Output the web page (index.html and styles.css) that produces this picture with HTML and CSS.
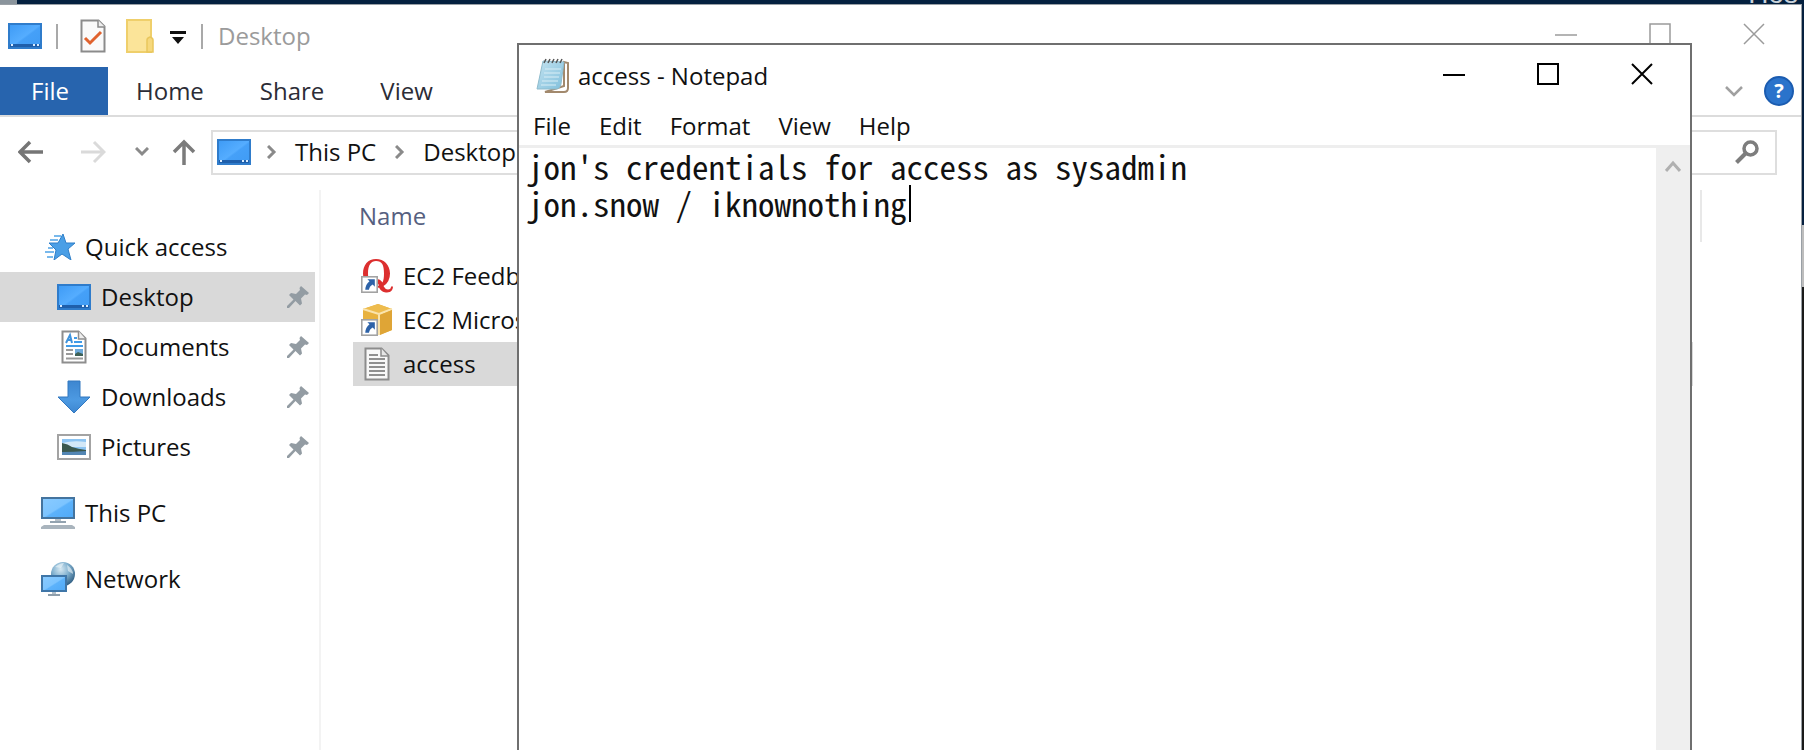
FILE: index.html
```html
<!DOCTYPE html>
<html lang="en">
<head>
<meta charset="utf-8">
<title>access - Notepad</title>
<link rel="stylesheet" href="styles.css">
</head>
<body>
<svg class="defs" aria-hidden="true">
  <defs>
    <linearGradient id="blue" x1="0" y1="0" x2="1" y2="1">
      <stop offset="0" stop-color="#3d9af5"/><stop offset=".5" stop-color="#55adff"/><stop offset=".55" stop-color="#45a0f8"/><stop offset="1" stop-color="#3f9bf4"/>
    </linearGradient>
    <linearGradient id="screen" x1="0" y1="0" x2="1" y2="1">
      <stop offset="0" stop-color="#8acbff"/><stop offset=".5" stop-color="#7cc4ff"/><stop offset=".55" stop-color="#5cb2fb"/><stop offset="1" stop-color="#4fa9f7"/>
    </linearGradient>
    <linearGradient id="arrow" x1="0" y1="0" x2="0" y2="1">
      <stop offset="0" stop-color="#3d86d0"/><stop offset=".6" stop-color="#4d9ae2"/><stop offset="1" stop-color="#3d86d0"/>
    </linearGradient>
    <radialGradient id="globe" cx=".4" cy=".3" r=".7">
      <stop offset="0" stop-color="#d6e8f2"/><stop offset=".5" stop-color="#83b2d0"/><stop offset="1" stop-color="#356488"/>
    </radialGradient>
    <linearGradient id="pad" x1="0" y1="0" x2="1" y2="1">
      <stop offset="0" stop-color="#c4e3f0"/><stop offset="1" stop-color="#7fbfdc"/>
    </linearGradient>
    <symbol id="desktop" viewBox="0 0 34 26">
      <rect x="1" y="1" width="32" height="24" fill="url(#blue)" stroke="#2f7ccb" stroke-width="2"/>
      <path d="M2 21h30v3H2z" fill="#1f5fab"/>
      <path d="M3 21h2v2H3zM25 21h2v2h-2zM29 21h2v2h-2z" fill="#d9ecff"/>
    </symbol>
    <symbol id="pin" viewBox="0 0 22 22">
      <path d="M14 0l8 7-2 2-2-.5-4 4 1 5-2 2-4.500-4.500L2 22H0v-2l6.500-6.500L2 9l2-2 5 1 4-4-.5-2z" fill="#939ca3"/>
    </symbol>
    <symbol id="shortcut" viewBox="0 0 16 16">
      <rect x=".75" y=".75" width="14.500" height="14.500" fill="#fff" stroke="#a3a3a3" stroke-width="1.500"/>
      <path d="M6 3h7v7l-2-2c-2 1-3 2.500-3.500 5H4c0-3 1.500-6 4-8z" fill="#2d62a8"/>
    </symbol>
  </defs>
</svg>

<main class="desktop">
  <div class="backdrop"><span class="backdrop-text">Hos</span></div>

  <section class="explorer" aria-label="Desktop">
    <header class="titlebar">
      <svg class="i-desktop" aria-hidden="true"><use href="#desktop"/></svg>
      <span class="divider divider-first"></span>
      <button class="plain" aria-label="Properties">
        <svg width="26" height="34" viewBox="0 0 26 34"><path d="M1.500 1.500h17l6 6v25h-23z" fill="#fafafa" stroke="#8b8b8b" stroke-width="2"/><path d="M18 1v7h7" fill="#eee" stroke="#8b8b8b" stroke-width="1.500"/><path d="M5 19l5 5 11-11" fill="none" stroke="#e0622e" stroke-width="3"/></svg>
      </button>
      <button class="plain folder" aria-label="New folder">
        <svg width="28" height="34" viewBox="0 0 28 34"><path d="M1 1h24v32H1z" fill="#fbe499" stroke="#efcf6b" stroke-width="2"/><path d="M21 33V21q0-2 3-3 3 1 3 3v12z" fill="#f6d87c" stroke="#e9c65c" stroke-width="1.500"/></svg>
      </button>
      <button class="plain customize" aria-label="Customize toolbar">
        <svg width="16" height="14" viewBox="0 0 16 14"><path d="M0 0h16v3H0zM2 6h12l-6 7z" fill="#111"/></svg>
      </button>
      <span class="divider"></span>
      <h1 class="window-title muted">Desktop</h1>
      <div class="controls muted">
        <button class="control" aria-label="Minimize"><svg width="22" height="22" viewBox="0 0 22 22"><path d="M0 12h22" /></svg></button>
        <button class="control" aria-label="Maximize"><svg width="22" height="22" viewBox="0 0 22 22"><path d="M1 1h20v20H1z"/></svg></button>
        <button class="control" aria-label="Close"><svg width="22" height="22" viewBox="0 0 22 22"><path d="M1 1l20 20M21 1L1 21"/></svg></button>
      </div>
    </header>

    <nav class="ribbon" aria-label="Ribbon">
      <button class="tab tab-file">File</button>
      <button class="tab">Home</button>
      <button class="tab">Share</button>
      <button class="tab">View</button>
      <span class="spacer"></span>
      <button class="plain" aria-label="Expand the ribbon"><svg width="18" height="12" viewBox="0 0 18 12"><path d="M1 2l8 8 8-8" fill="none" stroke="#a0a0a0" stroke-width="2.500"/></svg></button>
      <button class="help" aria-label="Help">?</button>
    </nav>

    <div class="location">
      <button class="plain" aria-label="Back"><svg width="26" height="24" viewBox="0 0 26 24"><path d="M25 12H3M12 2L2 12l10 10" fill="none" stroke="#757575" stroke-width="3.500"/></svg></button>
      <button class="plain forward" aria-label="Forward"><svg width="26" height="24" viewBox="0 0 26 24"><path d="M1 12h22M14 2l10 10-10 10" fill="none" stroke="#dadada" stroke-width="3"/></svg></button>
      <button class="plain recent" aria-label="Recent locations"><svg width="14" height="10" viewBox="0 0 14 10"><path d="M1 1l6 6 6-6" fill="none" stroke="#8a8a8a" stroke-width="3"/></svg></button>
      <button class="plain up" aria-label="Up"><svg width="24" height="26" viewBox="0 0 24 26"><path d="M12 26V3M2 13L12 3l10 10" fill="none" stroke="#7b7b7b" stroke-width="3.500"/></svg></button>
      <div class="address">
        <svg class="i-desktop" aria-hidden="true"><use href="#desktop"/></svg>
        <svg class="crumb-arrow" viewBox="0 0 10 14" aria-hidden="true"><path d="M1 1l6 6-6 6"/></svg>
        <a class="crumb" href="#this-pc">This PC</a>
        <svg class="crumb-arrow" viewBox="0 0 10 14" aria-hidden="true"><path d="M1 1l6 6-6 6"/></svg>
        <a class="crumb" href="#desktop-folder">Desktop</a>
      </div>
      <div class="search">
        <button class="plain" aria-label="Search"><svg width="24" height="24" viewBox="0 0 24 24"><circle cx="15.500" cy="8.500" r="6.500" fill="none" stroke="#7d7d7d" stroke-width="3.500"/><path d="M11 13L1.500 22.500" stroke="#7d7d7d" stroke-width="4"/></svg></button>
      </div>
    </div>

    <div class="panes">
      <nav class="tree" aria-label="Navigation pane">
        <a class="node root" href="#quick">
          <span class="pic"><svg width="34" height="26" viewBox="0 0 34 26"><path d="M22 0l3 9h9l-7 6 3 11-9-6-8 6 2-10-7-7h9z" fill="#4a9fe6" stroke="#2f7fc8" stroke-width="1"/><path d="M13 2h7M9 6h8M7 14h5M4 18h9M6 23h6" stroke="#79b9ec" stroke-width="2"/></svg></span>Quick access</a>
        <a class="node leaf selected" href="#desktop-folder">
          <span class="pic"><svg class="i-desktop"><use href="#desktop"/></svg></span>Desktop<svg class="pin"><use href="#pin"/></svg></a>
        <a class="node leaf" href="#documents">
          <span class="pic"><svg width="26" height="34" viewBox="0 0 26 34"><path d="M1.500 1.500h16l7 7v24h-23z" fill="#fff" stroke="#8e8e8e" stroke-width="2"/><path d="M17.500 1v8h7" fill="#eee" stroke="#8e8e8e" stroke-width="1.500"/><path d="M5 13l4-8 2 8M6 10h5" stroke="#3f93dc" stroke-width="2" fill="none"/><path d="M13 8h3M13 12h8M5 16h17" stroke="#3f9be8" stroke-width="2"/><path d="M5 20h7M5 24h7M5 28.500h17" stroke="#999" stroke-width="2"/><path d="M14 19h8v7h-8z" fill="#6eaadb"/><path d="M14 24l3-2 5 2v2h-8z" fill="#3f6156"/></svg></span>Documents<svg class="pin"><use href="#pin"/></svg></a>
        <a class="node leaf" href="#downloads">
          <span class="pic"><svg width="34" height="34" viewBox="0 0 34 34"><path d="M11 1h12v16h10L17 33 1 17h10z" fill="url(#arrow)" stroke="#3278c0"/></svg></span>Downloads<svg class="pin"><use href="#pin"/></svg></a>
        <a class="node leaf" href="#pictures">
          <span class="pic"><svg width="34" height="26" viewBox="0 0 34 26"><path d="M1 1h32v24H1z" fill="#fff" stroke="#a3a3a3" stroke-width="2"/><path d="M5 5h24v16H5z" fill="#8cc4f2"/><path d="M5 9q12-3 24-1v5H5z" fill="#d3e8f7"/><path d="M5 17h24v4H5z" fill="#5386b4"/><path d="M5 9q6 1 10 4 6 2 14 3v1q-12 1-24 1z" fill="#3b584d"/></svg></span>Pictures<svg class="pin"><use href="#pin"/></svg></a>
        <a class="node root spaced" href="#this-pc">
          <span class="pic"><svg width="34" height="32" viewBox="0 0 34 32"><path d="M1 1h32v20H1z" fill="url(#screen)" stroke="#44749f" stroke-width="2"/><path d="M14 22h6v2h-6z" fill="#b9c3cb"/><path d="M9 24h16v2H9z" fill="#93a3b0"/><path d="M3 28h28l3 2v2H0v-2z" fill="#a9b4bd"/></svg></span>This PC</a>
        <a class="node root spaced" href="#network">
          <span class="pic"><svg width="34" height="34" viewBox="0 0 34 34"><circle cx="22" cy="12" r="12" fill="url(#globe)"/><path d="M14 5q5-4 9-4l-3 5zM26 3q6 4 6 9l-5-3z" fill="#eef6fa" opacity=".6"/><path d="M1 14h24v15H1z" fill="url(#screen)" stroke="#3f76a8" stroke-width="2"/><path d="M11 30h4v2h-4z" fill="#b3c0ca"/><path d="M7 32h12v2H7z" fill="#8e9eab"/></svg></span>Network</a>
      </nav>

      <div class="files">
        <div class="column-head"><button class="column-name">Name</button></div>
        <a class="file" href="#feedback">
          <svg width="32" height="34" viewBox="0 0 32 34" aria-hidden="true"><path fill-rule="evenodd" d="M15 0C7 0 2 6 2 14.500S7 29 15 29q2 0 3-.5c2 4 5 5 8 5 4 0 6-3 6-6h-2c0 2-1 3-3 3s-3-1-4.500-3.500Q29 23 29 14.500C29 6 23 0 15 0zm0 2c6 0 8 4 8 12.500 0 4-.5 7-1.500 9C20 21 18 20 15 20l-1 3c2 0 3 1 4 3.500-1 .5-2 .5-3 .5-5 0-8-4-8-12.500S10 2 15 2z" fill="#dc2f2f"/><use href="#shortcut" x="0" y="17" width="17" height="17"/></svg>
          EC2 Feedback</a>
        <a class="file" href="#windows-guide">
          <svg width="32" height="34" viewBox="0 0 32 34" aria-hidden="true"><path d="M2 6l15-5 14 5v21l-13 5-16-5z" fill="#e8b23f"/><path d="M2 6l15-5 14 5-13 5z" fill="#eebc4e"/><path d="M2 6l16 5v21M31 6l-13 5" fill="none" stroke="#fae4ad" stroke-width="2"/><path d="M19 12l12-5v20l-12 5z" fill="#dfa536"/><use href="#shortcut" x="0" y="16" width="17" height="17"/></svg>
          EC2 Microsoft Windows Guide</a>
        <a class="file selected" href="#access">
          <svg width="32" height="34" viewBox="0 0 32 34" aria-hidden="true"><path d="M4.500 1.500h16l7 7v24h-23z" fill="#f8f8f8" stroke="#8c8c8c" stroke-width="2"/><path d="M20 1v8h7" fill="#e6e6e6" stroke="#8c8c8c" stroke-width="1.500"/><path d="M8 8h9M8 12h16M8 16h16M8 20h16M8 24h16M8 28h16" stroke="#8f8f8f" stroke-width="2"/></svg>
          access</a>
      </div>
    </div>
  </section>

  <section class="notepad" aria-label="access - Notepad">
    <header class="notepad-title">
      <svg width="34" height="36" viewBox="0 0 34 36" aria-hidden="true"><path d="M9 34h19q4 0 4-4V5l-4-1v24z" fill="#fff" stroke="#a2896d" stroke-width="2"/><path d="M7 3l21 1-3 22q-1 5-5 5H1z" fill="url(#pad)" stroke="#8fbccd" stroke-width="1"/><path d="M9 11h16M8 15h16M8 19h15M6 23h16M5 27h15" stroke="#d9eef6" stroke-width="1"/><path d="M8 5l2-4M12 5l2-4M16 5l2-4M20 5l2-4M24 5l2-4" stroke="#555" stroke-width="1.500"/></svg>
      <h2 class="window-title">access - Notepad</h2>
      <div class="controls strong">
        <button class="control" aria-label="Minimize"><svg width="22" height="22" viewBox="0 0 22 22"><path d="M0 12h22" /></svg></button>
        <button class="control" aria-label="Maximize"><svg width="22" height="22" viewBox="0 0 22 22"><path d="M1 1h20v20H1z"/></svg></button>
        <button class="control" aria-label="Close"><svg width="22" height="22" viewBox="0 0 22 22"><path d="M1 1l20 20M21 1L1 21"/></svg></button>
      </div>
    </header>
    <nav class="menubar" aria-label="Menu">
      <button class="plain">File</button>
      <button class="plain">Edit</button>
      <button class="plain">Format</button>
      <button class="plain">View</button>
      <button class="plain">Help</button>
    </nav>
    <div class="editor">
      <textarea class="editor-text" aria-label="Text editor" spellcheck="false">jon's credentials for access as sysadmin
jon.snow / iknownothing</textarea>
      <span class="caret"></span>
      <div class="scrollbar">
        <button class="plain" aria-label="Scroll up"><svg width="16" height="14" viewBox="0 0 16 14"><path d="M1 12l7-8 7 8" fill="none" stroke="#b0b0b0" stroke-width="3"/></svg></button>
      </div>
    </div>
  </section>
</main>
</body>
</html>
```

FILE: styles.css
```css
* { box-sizing: border-box; }

body {
  margin: 0;
  font-family: "Open Sans", "Noto Sans", sans-serif;
  font-size: 24px;
  line-height: 32px;
  color: #111;
}

button {
  font: inherit;
  color: inherit;
  border: 0;
  background: none;
  padding: 0;
}

a { color: inherit; text-decoration: none; }
svg { display: block; flex: none; }
.defs { position: absolute; width: 0; height: 0; }

.desktop {
  position: relative;
  height: 100vh;
  overflow: hidden;
  background: linear-gradient(#06203f 0 225px, #bdbdbd 225px 287px, #1a1a1a 287px);
}

.backdrop {
  position: absolute;
  inset: 0 0 auto 0;
  height: 5px;
  overflow: hidden;
  background: linear-gradient(90deg, #8a949c 0 17px, #04203f 17px);
}

.backdrop-text {
  position: absolute;
  right: 6px;
  bottom: -5px;
  font-family: "Liberation Sans", sans-serif;
  font-size: 28px;
  color: #c9d2da;
}

/* Explorer window */
.explorer {
  position: absolute;
  inset: 4px 2px 0 0;
  display: flex;
  flex-direction: column;
  background: #fff;
  border-top: 1px solid #9aa0a6;
  border-right: 1px solid #9aa0a6;
}

.titlebar {
  display: flex;
  align-items: center;
  height: 62px;
  padding-left: 8px;
}

.i-desktop { width: 34px; height: 26px; }
.divider { width: 2px; height: 25px; background: #a9a9a9; margin-right: 15px; }
.divider-first { margin: 0 22px 0 14px; }
.folder { margin-left: 20px; }
.customize { margin: 4px 15px 0 16px; }
.window-title { margin: 0; font-size: 24px; font-weight: 400; }
.muted { color: #9b9b9b; }

.controls { display: flex; align-self: flex-start; margin-left: auto; }
.control { display: grid; place-items: center; width: 94px; height: 58px; }
.control path { fill: none; stroke: currentColor; stroke-width: 1.500; }
.strong { margin-right: 1px; }
.strong .control path { stroke: #000; stroke-width: 2; }

.ribbon {
  display: flex;
  align-items: center;
  height: 50px;
  padding-right: 7px;
  border-bottom: 2px solid #dcdcdc;
}

.tab { height: 48px; padding: 0 28px; color: #2c2c36; }
.tab-file { width: 108px; padding: 0 8px 0 0; background: #2764ae; color: #fff; }
.spacer { flex: 1; }

.help {
  width: 30px;
  height: 30px;
  margin-left: 21px;
  border: 2px solid #1b5cb0;
  border-radius: 50%;
  background: #2a73cb;
  color: #fff;
  font-size: 20px;
  font-weight: 700;
  line-height: 26px;
}

.location {
  display: flex;
  align-items: center;
  height: 70px;
  padding: 0 24px 0 18px;
}

.forward { margin-left: 36px; }
.recent { margin-left: 29px; }
.up { margin: 0 15px 0 23px; }

.address {
  display: flex;
  align-items: center;
  flex: 1;
  height: 45px;
  padding-left: 4px;
  border: 2px solid #dedede;
}

.crumb-arrow { width: 10px; height: 14px; margin: 0 18px 0 16px; }
.crumb-arrow path { fill: none; stroke: #8a8a8a; stroke-width: 3; }
.crumb { margin-right: 3px; }

.search {
  display: flex;
  align-items: center;
  justify-content: flex-end;
  width: 320px;
  height: 45px;
  margin-left: 16px;
  padding-right: 16px;
  border: 2px solid #dedede;
}

.panes { display: flex; flex: 1; min-height: 0; padding-top: 3px; }

.tree {
  width: 321px;
  padding: 32px 4px 0 0;
  border-right: 2px solid #f3f3f3;
}

.node { display: flex; align-items: center; height: 50px; }
.root { padding-left: 41px; }
.leaf { padding-left: 57px; padding-right: 6px; }
.selected { background: #d9d9d9; }
.spaced { margin-top: 16px; }
.pic { display: grid; place-items: center; width: 34px; margin-right: 10px; }
.pin { width: 22px; height: 22px; margin-left: auto; }

.files { flex: 1; padding: 0 108px 0 32px; }

.column-head {
  height: 52px;
  margin-right: -9px;
  margin-bottom: 12px;
  border-right: 2px solid #e8e8e8;
}

.column-name { height: 52px; padding-left: 6px; color: #56607f; }

.file {
  display: flex;
  align-items: center;
  gap: 10px;
  height: 44px;
  padding-left: 8px;
  white-space: nowrap;
}

/* Notepad window */
.notepad {
  position: absolute;
  inset: 43px 112px 0 517px;
  display: flex;
  flex-direction: column;
  background: #fff;
  border: 2px solid #6f6f6f;
  border-bottom: 0;
}

.notepad-title { display: flex; align-items: center; gap: 8px; height: 61px; padding-left: 17px; }

.menubar {
  display: flex;
  align-items: center;
  gap: 28px;
  height: 42px;
  padding-left: 14px;
  border-bottom: 3px solid #eee;
}

.editor { position: relative; display: flex; flex: 1; min-height: 0; }

.editor-text,
.caret {
  font-family: "Noto Sans Mono CJK SC", "DejaVu Sans Mono", monospace;
  font-size: 33px;
  line-height: 37px;
}

.editor-text {
  flex: 1;
  padding: 0 8px;
  border: 0;
  outline: 0;
  resize: none;
  background: transparent;
  color: #111;
}

.caret {
  position: absolute;
  left: calc(23ch + 10px);
  top: 37px;
  width: 2px;
  height: 37px;
  background: #000;
}

.scrollbar {
  display: flex;
  justify-content: center;
  align-items: flex-start;
  width: 34px;
  padding-top: 11px;
  background: #efefef;
}
```
